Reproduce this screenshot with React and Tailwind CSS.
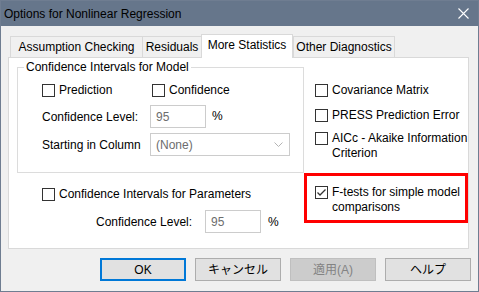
const Checkbox = ({ checked }) => (
  <span className="mt-[1px] flex h-[13px] w-[13px] shrink-0 items-center justify-center border border-[#333333] bg-white">
    {checked && (
      <svg width="11" height="11" viewBox="0 0 11 11" fill="none">
        <path d="M1.5 5.5 L4 8 L9.5 2.5" stroke="#333333" strokeWidth="1.3" />
      </svg>
    )}
  </span>
);

const CheckRow = ({ checked, children, className = "" }) => (
  <div className={`flex items-start gap-[4px] leading-[15px] ${className}`}>
    <Checkbox checked={checked} />
    <span className="whitespace-nowrap">{children}</span>
  </div>
);

const TextBox = ({ value, className = "" }) => (
  <div
    className={`flex h-[23px] w-[56px] items-center border border-[#cccccc] bg-white pl-[5px] text-[#6d6d6d] ${className}`}
  >
    {value}
  </div>
);

const Button = ({ children, primary, disabled }) => (
  <button
    className={`flex h-[23px] w-[86px] items-center justify-center ${
      primary
        ? "border-2 border-[#0078d7] bg-[#e1e1e1] text-black"
        : disabled
          ? "border border-[#bfbfbf] bg-[#cccccc] text-[#838383]"
          : "border border-[#adadad] bg-[#e1e1e1] text-black"
    }`}
  >
    {children}
  </button>
);

const tabs = [
  { label: "Assumption Checking", w: "w-[133px]" },
  { label: "Residuals", w: "w-[60px]" },
  { label: "More Statistics", w: "w-[92px]", active: true },
  { label: "Other Diagnostics", w: "w-[102px]" },
];

export default function App() {
  return (
    <div className="flex h-[292px] w-[479px] flex-col border border-[#6f7d91] bg-[#f0f0f0] font-['Liberation_Sans','Noto_Sans_CJK_JP',sans-serif] text-[12px] text-black">
      {/* Title bar */}
      <div className="flex h-[25px] shrink-0 items-center justify-between bg-[#66768b] pl-[3px] pr-[9px]">
        <span className="leading-[16px]">Options for Nonlinear Regression</span>
        <svg width="11" height="11" viewBox="0 0 11 11">
          <path d="M0.5 0.5 L10.5 10.5 M10.5 0.5 L0.5 10.5" stroke="#ffffff" strokeWidth="1.1" />
        </svg>
      </div>

      {/* Tabs */}
      <div className="ml-[9px] mt-[8px] flex h-[23px] items-end">
        {tabs.map((t) =>
          t.active ? (
            <div
              key={t.label}
              className={`relative z-10 -mb-[1px] flex h-[24px] ${t.w} justify-center whitespace-nowrap border border-b-0 border-[#d9d9d9] bg-white pt-[2px] leading-[16px]`}
            >
              {t.label}
            </div>
          ) : (
            <div
              key={t.label}
              className={`flex h-[21px] ${t.w} -mr-[1px] justify-center whitespace-nowrap border border-b-0 border-[#d9d9d9] bg-[#f0f0f0] pt-[2px] leading-[16px]`}
            >
              {t.label}
            </div>
          )
        )}
      </div>

      {/* Tab panel */}
      <div className="ml-[7px] flex h-[192px] w-[461px] border border-[#d9d9d9] bg-white">
        {/* Left column */}
        <div className="flex w-[295px] shrink-0 flex-col">
          <div className="ml-[8px] mt-[9px] h-[106px] w-[287px] border border-[#dcdcdc]">
            <div className="-mt-[9px] ml-[6px] w-fit bg-white px-[2px] leading-[16px]">
              Confidence Intervals for Model
            </div>
            <div className="ml-[24px] mt-[8px] flex">
              <CheckRow className="w-[110px]">Prediction</CheckRow>
              <CheckRow>Confidence</CheckRow>
            </div>
            <div className="ml-[24px] mt-[7px] flex items-center">
              <span className="w-[108px]">Confidence Level:</span>
              <TextBox value="95" />
              <span className="ml-[6px] -mt-[2px]">%</span>
            </div>
            <div className="ml-[24px] mt-[5px] flex items-center">
              <span className="w-[108px]">Starting in Column</span>
              <div className="flex h-[23px] w-[140px] items-center justify-between border border-[#cccccc] bg-white pl-[5px] pr-[6px] text-[#6d6d6d]">
                <span>(None)</span>
                <svg width="9" height="5" viewBox="0 0 9 5" fill="none">
                  <path d="M0.5 0.5 L4.5 4.5 L8.5 0.5" stroke="#b4b4b4" strokeWidth="1" />
                </svg>
              </div>
            </div>
          </div>

          <CheckRow className="ml-[33px] mt-[14px]">Confidence Intervals for Parameters</CheckRow>
          <div className="mt-[8px] flex items-center">
            <span className="ml-[87px] w-[109px]">Confidence Level:</span>
            <TextBox value="95" />
            <span className="ml-[7px]">%</span>
          </div>
        </div>

        {/* Right column */}
        <div className="flex w-[164px] flex-col pt-[25px]">
          <CheckRow className="ml-[11px]">Covariance Matrix</CheckRow>
          <CheckRow className="ml-[11px] mt-[10px]">PRESS Prediction Error</CheckRow>
          <CheckRow className="ml-[11px] mt-[8px]">
            AICc - Akaike Information
            <br />
            Criterion
          </CheckRow>
          <div className="mt-[12px] h-[50px] border-[3px] border-[#ff0000] pl-[8px] pt-[9px]">
            <CheckRow checked>
              F-tests for simple model
              <br />
              comparisons
            </CheckRow>
          </div>
        </div>
      </div>

      {/* Buttons */}
      <div className="mt-[9px] flex justify-end gap-[9px] pr-[7px]">
        <Button primary>OK</Button>
        <Button>キャンセル</Button>
        <Button disabled>適用(A)</Button>
        <Button>ヘルプ</Button>
      </div>
    </div>
  );
}
